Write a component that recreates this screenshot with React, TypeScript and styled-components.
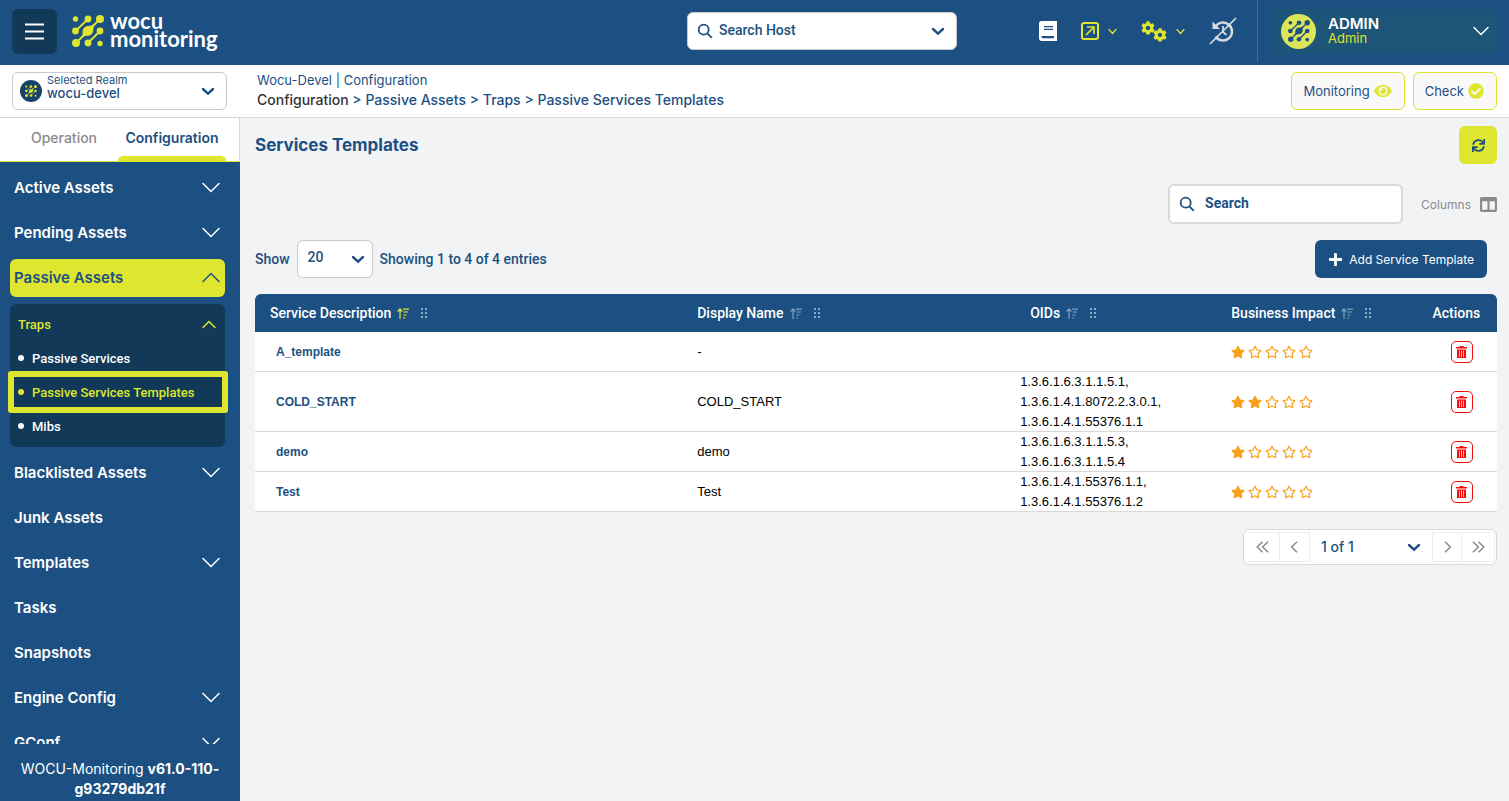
import React from "react";
import styled, { createGlobalStyle, css } from "styled-components";
import {
  FaCheckCircle,
  FaCog,
  FaColumns,
  FaEye,
  FaPlus,
  FaRegStar,
  FaStar,
  FaSync,
} from "react-icons/fa";

const color = {
  blue: "#1d5082",
  navy: "#123957",
  lime: "#dfe62f",
  page: "#f2f3f5",
  line: "#d9d9d9",
  grey: "#8b8b8b",
  white: "#ffffff",
  orange: "#f9a11b",
  red: "#f30d0d",
};

const wide = `Inter, "Liberation Sans", sans-serif`;
const narrow = `Roboto, "Liberation Sans", sans-serif`;
const plain = `"Liberation Sans", Arial, sans-serif`;

const GlobalStyle = createGlobalStyle`
  *, *::before, *::after { box-sizing: border-box; }
  body { margin: 0; background: ${color.page}; color: ${color.blue}; font-family: ${wide}; font-size: 14px; }
  button, input, select { font: inherit; color: inherit; margin: 0; }
  button { cursor: pointer; }
  a { color: inherit; text-decoration: none; }
  svg { display: block; flex: none; }
`;

/* ---------- shell ---------- */

const Shell = styled.div`
  display: flex;
  flex-direction: column;
  height: 100vh;
`;

const Header = styled.header`
  flex: none;
  display: flex;
  align-items: center;
  height: 65px;
  padding: 0 12px 3px;
  background: ${color.blue};
`;

const HeaderSide = styled.div<{ $grow: number; $end?: boolean }>`
  flex: ${(p) => p.$grow} 1 0;
  display: flex;
  align-items: center;
  justify-content: ${(p) => (p.$end ? "flex-end" : "flex-start")};
`;

const MenuButton = styled.button`
  display: grid;
  place-items: center;
  width: 45px;
  height: 45px;
  padding: 0;
  border: 0;
  border-radius: 6px;
  background: ${color.navy};
  color: ${color.white};
`;

const Brand = styled.a`
  display: flex;
  align-items: center;
  gap: 6px;
  margin-left: 15px;
  color: ${color.lime};
`;

const BrandName = styled.span`
  font-family: Lato, sans-serif;
  font-size: 22px;
  font-weight: 700;
  line-height: 18px;
  padding-bottom: 3px;
  color: ${color.white};
`;

const HostSearch = styled.div`
  display: flex;
  align-items: center;
  gap: 6px;
  width: 270px;
  height: 38px;
  padding: 0 11px 0 9px;
  border: 1px solid #c9c9c9;
  border-radius: 6px;
  background: ${color.white};
`;

const TextInput = styled.input<{ $strong?: boolean }>`
  flex: 1;
  min-width: 0;
  padding: 0 0 2px;
  border: 0;
  outline: 0;
  background: transparent;
  font-family: ${narrow};
  font-size: 14px;
  font-weight: ${(p) => (p.$strong ? 700 : 500)};
  &::placeholder { color: ${color.blue}; opacity: 1; }
`;

const BareButton = styled.button`
  display: flex;
  align-items: center;
  gap: 9px;
  padding: 0;
  border: 0;
  background: none;
`;

const Tools = styled.div`
  display: flex;
  align-items: center;
  height: 62px;
  gap: 24px;
  padding-right: 20px;
  border-right: 1px solid #3f7188;
  color: ${color.lime};
`;

const Gears = styled.span`
  display: flex;
  width: 26px;
  height: 21px;
  & svg:last-child { align-self: flex-end; margin-left: -2px; }
`;

const Account = styled.button`
  display: flex;
  align-items: center;
  gap: 12px;
  width: 223px;
  height: 45px;
  margin-left: 16px;
  padding: 0 8px 0 7px;
  border: 0;
  border-radius: 6px;
  background: #1d5578;
  color: ${color.white};
  text-align: left;
`;

const Avatar = styled.span<{ $size: number; $dark?: boolean }>`
  display: grid;
  place-items: center;
  flex: none;
  width: ${(p) => p.$size}px;
  height: ${(p) => p.$size}px;
  border-radius: 50%;
  background: ${(p) => (p.$dark ? "#17436a" : "#dde559")};
  color: ${(p) => (p.$dark ? color.lime : color.blue)};
`;

const AccountText = styled.span`
  flex: 1;
  display: flex;
  flex-direction: column;
  font-size: 15px;
  font-weight: 600;
  line-height: 15px;
  & small { font-size: 13px; font-weight: 400; color: ${color.lime}; }
`;

/* ---------- sub bar ---------- */

const SubBar = styled.div`
  flex: none;
  display: flex;
  align-items: center;
  height: 53px;
  padding: 0 12px;
  border-bottom: 1px solid ${color.line};
  background: ${color.white};
`;

const Realm = styled.label`
  display: flex;
  align-items: center;
  gap: 5px;
  width: 215px;
  height: 38px;
  margin-right: 30px;
  padding: 0 11px 0 7px;
  border: 1px solid #c9c9c9;
  border-radius: 6px;
`;

const RealmText = styled.span`
  flex: 1;
  display: flex;
  flex-direction: column;
  padding-bottom: 9px;
  font-size: 11px;
  line-height: 12px;
`;

const BareSelect = styled.select<{ $size?: number }>`
  appearance: none;
  padding: 0;
  border: 0;
  outline: 0;
  background: transparent;
  font-size: ${(p) => p.$size ?? 13}px;
  font-weight: 500;
  line-height: 14px;
`;

const Crumbs = styled.nav`
  flex: 1;
  padding-bottom: 2px;
  line-height: 20px;
  font-size: 13px;
  & p { margin: 0; }
`;

const Trail = styled.p`
  font-size: 14px;
  font-weight: 500;
  & b { font-weight: 500; color: #333; }
`;

const OutlineButton = styled.button`
  display: flex;
  align-items: center;
  gap: 4px;
  height: 38px;
  margin-left: 8px;
  padding: 0 12px 0 11px;
  border: 1px solid ${color.lime};
  border-radius: 6px;
  background: #f9f9f9;
  font-family: ${wide};
  font-size: 13px;
  & svg { color: ${color.lime}; }
`;

/* ---------- sidebar ---------- */

const Body = styled.div`
  flex: 1;
  display: flex;
  min-height: 0;
`;

const Sidebar = styled.aside`
  flex: none;
  display: flex;
  flex-direction: column;
  width: 240px;
  background: ${color.blue};
  color: ${color.white};
`;

const Tabs = styled.div`
  flex: none;
  display: flex;
  gap: 6px;
  height: 44px;
  padding: 0 13px 0 16px;
  border-right: 1px solid ${color.line};
  border-bottom: 1px solid ${color.lime};
  background: ${color.white};
`;

const Tab = styled.button<{ $active?: boolean }>`
  flex: ${(p) => (p.$active ? "0 0 108px" : "1")};
  padding: 0;
  border: 0;
  border-bottom: 5px solid transparent;
  background: none;
  font-size: 14px;
  font-weight: ${(p) => (p.$active ? 600 : 500)};
  color: ${(p) => (p.$active ? color.blue : color.grey)};
  ${(p) =>
    p.$active &&
    css`
      border: 0;
      padding-bottom: 5px;
      background: radial-gradient(circle at 5px 5px, ${color.lime} 5px, transparent 5px) 0 100% / 5px 5px no-repeat,
        radial-gradient(circle at 0 5px, ${color.lime} 5px, transparent 5px) 100% 100% / 5px 5px no-repeat,
        linear-gradient(${color.lime}, ${color.lime}) 50% 100% / 98px 5px no-repeat;
    `}
`;

const Menu = styled.nav`
  flex: 1;
  min-height: 0;
  overflow: hidden;
  display: flex;
  flex-direction: column;
  gap: 7px;
  padding: 7px 15px 0 10px;
`;

const MenuItem = styled.button<{ $active?: boolean }>`
  flex: none;
  display: flex;
  align-items: center;
  justify-content: space-between;
  height: 38px;
  padding: 0 5px 1px 4px;
  border: 0;
  border-radius: 6px;
  background: ${(p) => (p.$active ? color.lime : "transparent")};
  color: ${(p) => (p.$active ? color.blue : color.white)};
  font-size: 15px;
  font-weight: 600;
`;

const SubMenu = styled.div`
  flex: none;
  display: flex;
  flex-direction: column;
  padding: 4px 0;
  border-radius: 6px;
  background: ${color.navy};
  font-family: ${narrow};
  font-size: 13px;
  font-weight: 500;
`;

const SubHead = styled.button`
  display: flex;
  align-items: center;
  justify-content: space-between;
  height: 33px;
  padding: 0 9px 0 8px;
  border: 0;
  background: none;
  color: ${color.lime};
`;

const SubItem = styled.a<{ $active?: boolean }>`
  position: relative;
  display: flex;
  align-items: center;
  gap: 8px;
  height: 34px;
  padding-left: 8px;
  color: ${(p) => (p.$active ? color.lime : color.white)};
  &::before {
    content: "";
    width: 6px;
    height: 6px;
    border-radius: 50%;
    background: currentColor;
  }
  ${(p) =>
    p.$active &&
    css`
      &::after {
        content: "";
        position: absolute;
        inset: -4px -3px -4px -2px;
        border: 6px solid ${color.lime};
        border-radius: 3px;
      }
    `}
`;

const Version = styled.p`
  flex: none;
  margin: 0;
  padding: 15px 10px 2px;
  text-align: center;
  font-size: 14px;
  line-height: 20px;
`;

/* ---------- main ---------- */

const Main = styled.main`
  flex: 1;
  min-width: 0;
  overflow: auto;
  padding: 8px 12px 8px 15px;
`;

const Bar = styled.div<{ $gap?: number; $top?: number; $end?: boolean; $inset?: number }>`
  display: flex;
  align-items: center;
  justify-content: ${(p) => (p.$end ? "flex-end" : "space-between")};
  gap: ${(p) => p.$gap ?? 0}px;
  margin-top: ${(p) => p.$top ?? 0}px;
  padding-right: ${(p) => p.$inset ?? 0}px;
`;

const Title = styled.h1`
  margin: 0;
  font-size: 17px;
  font-weight: 700;
  line-height: 24px;
`;

const RefreshButton = styled.button`
  display: grid;
  place-items: center;
  width: 38px;
  height: 38px;
  padding: 0;
  border: 0;
  border-radius: 6px;
  background: ${color.lime};
`;

const SearchBox = styled.div`
  display: flex;
  align-items: center;
  gap: 10px;
  width: 235px;
  height: 40px;
  padding: 0 9px;
  border: 2px solid ${color.line};
  border-radius: 6px;
  background: ${color.white};
`;

const ColumnsButton = styled(BareButton)`
  font-size: 12px;
  color: ${color.grey};
`;

const Paging = styled.div`
  display: flex;
  align-items: center;
  gap: 7px;
  font-family: ${narrow};
  font-weight: 500;
`;

const SelectBox = styled.span`
  display: flex;
  align-items: center;
  justify-content: space-between;
  width: 76px;
  height: 38px;
  padding: 0 7px 0 10px;
  border: 1px solid #c9c9c9;
  border-radius: 6px;
  background: ${color.white};
  & select { flex: 1; min-width: 0; padding-bottom: 4px; }
`;

const AddButton = styled.button`
  display: flex;
  align-items: center;
  gap: 6px;
  height: 38px;
  padding: 0 13px;
  border: 0;
  border-radius: 6px;
  background: ${color.blue};
  color: ${color.white};
  font-size: 12px;
`;

const Table = styled.table`
  width: 100%;
  margin-top: 16px;
  table-layout: fixed;
  border-spacing: 0;
  font-family: ${plain};
  font-size: 13px;
  line-height: 20px;
  color: #000;
`;

const Th = styled.th<{ $width?: string; $indent?: number }>`
  width: ${(p) => p.$width ?? "auto"};
  height: 38px;
  padding: 0 0 0 ${(p) => p.$indent ?? 15}px;
  background: ${color.blue};
  color: ${color.white};
  font-family: ${narrow};
  font-size: 14px;
  font-weight: 500;
  text-align: left;
  &:first-child { border-top-left-radius: 6px; }
  &:last-child { border-top-right-radius: 6px; }
`;

const HeadCell = styled.span`
  display: flex;
  align-items: center;
`;

const SortButton = styled.button<{ $active?: boolean }>`
  padding: 0;
  margin: 0 12px 0 6px;
  border: 0;
  background: none;
  color: ${(p) => (p.$active ? color.lime : "#7fa0bd")};
`;

const Grip = styled.svg`
  color: #8eabc4;
`;

const Td = styled.td<{ $indent?: number }>`
  height: 40px;
  padding: 0 0 0 ${(p) => p.$indent ?? 15}px;
  background: ${color.white};
  box-shadow: inset 0 -1px ${color.line};
  vertical-align: middle;
`;

const NameLink = styled.a`
  font-size: 12px;
  font-weight: 700;
  color: ${color.blue};
`;

const Stars = styled.span`
  display: flex;
  gap: 3px;
  color: ${color.orange};
`;

const DeleteButton = styled.button`
  display: grid;
  place-items: center;
  width: 22px;
  height: 22px;
  padding: 0;
  border: 1px solid ${color.red};
  border-radius: 5px;
  background: ${color.white};
  color: ${color.red};
`;

const Pager = styled.div`
  display: flex;
  height: 36px;
  padding: 2px 1px;
  border: 1px solid ${color.line};
  border-radius: 6px;
  background: ${color.white};
`;

const PagerButton = styled.button<{ $width: number }>`
  display: grid;
  place-items: center;
  width: ${(p) => p.$width}px;
  padding: 0;
  border: 1px solid #efefef;
  border-width: 1px 1px 1px 0;
  background: ${color.white};
  color: ${color.grey};
`;

const PageSelect = styled.span`
  display: flex;
  align-items: center;
  width: 123px;
  padding: 0 11px;
  border-right: 1px solid #efefef;
  & select { flex: 1; min-width: 0; }
`;

/* ---------- drawings ---------- */

const NetworkMark = ({ size }: { size: number }) => (
  <svg width={size} height={size} viewBox="0 0 32 32" fill="currentColor" aria-hidden="true">
    <path stroke="currentColor" strokeWidth="1.8" d="M3.5 16 16 4M4 28 28 4M16 28 28 16" />
    <path d="M10.6 17c-.2-3.600 2.400-6 6-6 2.400 0 4.400-1 6.400-3-1.400 2.200-1.600 4-1.600 6.400 0 3.800-2.600 6.400-6.200 6.400-2.400 0-4.400 1-6.400 3 1.400-2.200 2-4.200 1.800-6.800z" />
    <circle cx="3.5" cy="4" r="2.7" />
    <circle cx="16" cy="4" r="3.4" />
    <circle cx="28" cy="4" r="4" />
    <circle cx="3.5" cy="16" r="3.4" />
    <circle cx="28" cy="16" r="3.4" />
    <circle cx="4" cy="28" r="4" />
    <circle cx="16" cy="28" r="3.4" />
    <circle cx="28" cy="28.5" r="2.7" />
  </svg>
);

const Chevron = ({ w, thick = 1.5, up }: { w: number; thick?: number; up?: boolean }) => {
  const h = Math.round(w / 2) + 2;
  return (
    <svg width={w} height={h} viewBox={`0 0 ${w} ${h}`} fill="none" stroke="currentColor" strokeWidth={thick} strokeLinecap="round" aria-hidden="true">
      <path d={up ? `M1 ${h - 1.5} ${w / 2} 1.5 ${w - 1} ${h - 1.5}` : `M1 1.5 ${w / 2} ${h - 1.5} ${w - 1} 1.5`} />
    </svg>
  );
};

const SelectArrow = () => (
  <svg width="14" height="9" viewBox="0 0 14 9" fill="none" stroke={color.blue} strokeWidth="2.4" strokeLinecap="round" aria-hidden="true">
    <path d="M2 2l5 4.600L12 2" />
  </svg>
);

const Magnifier = () => (
  <svg width="16" height="16" viewBox="0 0 16 16" fill="none" stroke={color.blue} strokeWidth="1.8" aria-hidden="true">
    <circle cx="6.7" cy="6.7" r="5" />
    <path d="M10.3 10.3l4.500 4.500" />
  </svg>
);

const BookIcon = () => (
  <svg width="18" height="20" viewBox="0 0 18 20" aria-hidden="true">
    <path fill="#fff" d="M2.500 0H18v20H3A3 3 0 0 1 0 17V2.500A2.500 2.500 0 0 1 2.500 0z" />
    <path stroke={color.blue} strokeWidth="1.2" d="M5 5.600h9M5 8.400h9" />
    <path fill={color.blue} d="M3.500 15H15v2.200H3.500a1.100 1.100 0 0 1 0-2.200z" />
  </svg>
);

const OpenIcon = () => (
  <svg width="18" height="18" viewBox="0 0 18 18" fill="none" stroke="currentColor" strokeWidth="2" aria-hidden="true">
    <rect x="1" y="1" width="16" height="16" rx="2" />
    <path strokeWidth="1.7" d="M5 13l7.500-7.500M6 5h7v7" />
  </svg>
);

const HistoryOff = () => (
  <svg width="28" height="28" viewBox="0 0 28 28" fill="none" stroke="#d5dbe1" strokeWidth="2.4" aria-hidden="true">
    <path d="M6.500 9.500a9 9 0 1 1 0 10" />
    <path fill="#d5dbe1" stroke="none" d="M3.500 4.500v7.500H11z" />
    <path strokeWidth="1.8" d="M14 9v6l3.500 3" />
    <path strokeWidth="1.7" d="M1 27 27 1" />
  </svg>
);

const SortIcon = () => (
  <svg width="12" height="11" viewBox="0 0 12 11" fill="none" stroke="currentColor" strokeWidth="1.2" aria-hidden="true">
    <path d="M3 11V1.200M.7 3.500 3 1l2.300 2.500M6 1.100h6M6.500 4h4.500M6.500 7h3M6.500 9.800h1.500" />
  </svg>
);

const GripIcon = () => (
  <Grip width="6" height="10" viewBox="0 0 6 10" fill="currentColor" aria-hidden="true">
    <path d="M0 0h2v2H0zM4 0h2v2H4zM0 4h2v2H0zM4 4h2v2H4zM0 8h2v2H0zM4 8h2v2H4z" />
  </Grip>
);

const TrashIcon = () => (
  <svg width="12" height="12" viewBox="0 0 12 12" fill="currentColor" aria-hidden="true">
    <path d="M3.500 0h4v1H11v1.500H0V1h3.500z" />
    <path d="M1 3.500h9V12H1z" />
    <path stroke="#fff" strokeWidth=".7" d="M3.500 4.500V11M5.500 4.500V11M7.500 4.500V11" />
  </svg>
);

const PageArrow = ({ right, double }: { right?: boolean; double?: boolean }) => (
  <svg width="13" height="12" viewBox="0 0 13 12" fill="none" stroke="currentColor" strokeWidth="1.5" aria-hidden="true">
    {double ? (
      <path d={right ? "M1 .7 6.3 6 1 11.3M6.500.7 11.8 6l-5.300 5.300" : "M6.500.7 1.2 6l5.300 5.300M12 .7 6.7 6l5.300 5.300"} />
    ) : (
      <path d={right ? "M4 .7 9.3 6 4 11.3" : "M9 .7 3.7 6 9 11.3"} />
    )}
  </svg>
);

/* ---------- data ---------- */

const before = ["Active Assets", "Pending Assets"];
const after = [
  { label: "Blacklisted Assets", open: true },
  { label: "Junk Assets" },
  { label: "Templates", open: true },
  { label: "Tasks" },
  { label: "Snapshots" },
  { label: "Engine Config", open: true },
  { label: "GConf", open: true },
];

const rows = [
  { name: "A_template", display: "-", oids: [], impact: 1 },
  { name: "COLD_START", display: "COLD_START", oids: ["1.3.6.1.6.3.1.1.5.1,", "1.3.6.1.4.1.8072.2.3.0.1,", "1.3.6.1.4.1.55376.1.1"], impact: 2 },
  { name: "demo", display: "demo", oids: ["1.3.6.1.6.3.1.1.5.3,", "1.3.6.1.6.3.1.1.5.4"], impact: 1 },
  { name: "Test", display: "Test", oids: ["1.3.6.1.4.1.55376.1.1,", "1.3.6.1.4.1.55376.1.2"], impact: 1 },
];

const columns = [
  { label: "Service Description", width: "34.4%", sorted: true },
  { label: "Display Name", width: "26%" },
  { label: "OIDs", width: "17%", indent: 25 },
  { label: "Business Impact", width: "16.2%" },
];

export default function App() {
  return (
    <Shell>
      <GlobalStyle />
      <Header>
        <HeaderSide $grow={5}>
          <MenuButton aria-label="Toggle menu">
            <svg width="19" height="17" viewBox="0 0 19 17" stroke="currentColor" strokeWidth="2">
              <path d="M0 1.500h19M0 8.500h19M0 15.500h19" />
            </svg>
          </MenuButton>
          <Brand href="#">
            <NetworkMark size={32} />
            <BrandName>
              wocu
              <br />
              monitoring
            </BrandName>
          </Brand>
        </HeaderSide>
        <HostSearch>
          <Magnifier />
          <TextInput aria-label="Search Host" placeholder="Search Host" />
          <BareButton aria-label="Show hosts">
            <SelectArrow />
          </BareButton>
        </HostSearch>
        <HeaderSide $grow={4} $end>
          <Tools>
            <BareButton aria-label="Documentation">
              <BookIcon />
            </BareButton>
            <BareButton aria-label="Open external tools">
              <OpenIcon />
              <Chevron w={9} thick={1.2} />
            </BareButton>
            <BareButton aria-label="Settings">
              <Gears>
                <FaCog size={14} />
                <FaCog size={14} />
              </Gears>
              <Chevron w={9} thick={1.2} />
            </BareButton>
            <BareButton aria-label="History disabled">
              <HistoryOff />
            </BareButton>
          </Tools>
          <Account>
            <Avatar $size={35}>
              <NetworkMark size={22} />
            </Avatar>
            <AccountText>
              ADMIN
              <small>Admin</small>
            </AccountText>
            <Chevron w={16} />
          </Account>
        </HeaderSide>
      </Header>

      <SubBar>
        <Realm>
          <Avatar $size={22} $dark>
            <NetworkMark size={12} />
          </Avatar>
          <RealmText>
            Selected Realm
            <BareSelect defaultValue="wocu-devel">
              <option>wocu-devel</option>
            </BareSelect>
          </RealmText>
          <SelectArrow />
        </Realm>
        <Crumbs aria-label="Breadcrumb">
          <p>Wocu-Devel | Configuration</p>
          <Trail>
            <b>Configuration</b> &gt; <a href="#">Passive Assets</a> &gt; <a href="#">Traps</a> &gt;{" "}
            <a href="#">Passive Services Templates</a>
          </Trail>
        </Crumbs>
        <OutlineButton>
          Monitoring <FaEye size={18} />
        </OutlineButton>
        <OutlineButton>
          Check <FaCheckCircle size={16} />
        </OutlineButton>
      </SubBar>

      <Body>
        <Sidebar>
          <Tabs>
            <Tab>Operation</Tab>
            <Tab $active>Configuration</Tab>
          </Tabs>
          <Menu>
            {before.map((label) => (
              <MenuItem key={label}>
                {label}
                <Chevron w={18} />
              </MenuItem>
            ))}
            <MenuItem $active>
              Passive Assets
              <Chevron w={18} up />
            </MenuItem>
            <SubMenu>
              <SubHead>
                Traps
                <Chevron w={14} up />
              </SubHead>
              <SubItem href="#">Passive Services</SubItem>
              <SubItem href="#" $active>
                Passive Services Templates
              </SubItem>
              <SubItem href="#">Mibs</SubItem>
            </SubMenu>
            {after.map((item) => (
              <MenuItem key={item.label}>
                {item.label}
                {item.open && <Chevron w={18} />}
              </MenuItem>
            ))}
          </Menu>
          <Version>
            WOCU-Monitoring <b>v61.0-110-g93279db21f</b>
          </Version>
        </Sidebar>

        <Main>
          <Bar>
            <Title>Services Templates</Title>
            <RefreshButton aria-label="Refresh">
              <FaSync size={13} />
            </RefreshButton>
          </Bar>
          <Bar $end $gap={18} $top={20}>
            <SearchBox>
              <Magnifier />
              <TextInput $strong aria-label="Search" placeholder="Search" />
            </SearchBox>
            <ColumnsButton>
              Columns <FaColumns size={17} />
            </ColumnsButton>
          </Bar>
          <Bar $top={16} $inset={10}>
            <Paging>
              <label htmlFor="page-size">Show</label>
              <SelectBox>
                <BareSelect id="page-size" $size={14} defaultValue="20">
                  <option>20</option>
                </BareSelect>
                <SelectArrow />
              </SelectBox>
              <span>Showing 1 to 4 of 4 entries</span>
            </Paging>
            <AddButton>
              <FaPlus size={15} />
              Add Service Template
            </AddButton>
          </Bar>

          <Table>
            <thead>
              <tr>
                {columns.map((c) => (
                  <Th key={c.label} $width={c.width} $indent={c.indent}>
                    <HeadCell>
                      {c.label}
                      <SortButton $active={c.sorted} aria-label={`Sort by ${c.label}`}>
                        <SortIcon />
                      </SortButton>
                      <GripIcon />
                    </HeadCell>
                  </Th>
                ))}
                <Th>Actions</Th>
              </tr>
            </thead>
            <tbody>
              {rows.map((r) => (
                <tr key={r.name}>
                  <Td $indent={21}>
                    <NameLink href="#">{r.name}</NameLink>
                  </Td>
                  <Td>{r.display}</Td>
                  <Td>
                    {r.oids.map((oid) => (
                      <div key={oid}>{oid}</div>
                    ))}
                  </Td>
                  <Td>
                    <Stars role="img" aria-label={`${r.impact} of 5`}>
                      {[1, 2, 3, 4, 5].map((n) => (n <= r.impact ? <FaStar key={n} size={14} /> : <FaRegStar key={n} size={14} />))}
                    </Stars>
                  </Td>
                  <Td $indent={34}>
                    <DeleteButton aria-label={`Delete ${r.name}`}>
                      <TrashIcon />
                    </DeleteButton>
                  </Td>
                </tr>
              ))}
            </tbody>
          </Table>

          <Bar $end $top={17}>
            <Pager>
              <PagerButton $width={35} aria-label="First page">
                <PageArrow double />
              </PagerButton>
              <PagerButton $width={30} aria-label="Previous page">
                <PageArrow />
              </PagerButton>
              <PageSelect>
                <BareSelect $size={14} aria-label="Page" defaultValue="1 of 1">
                  <option>1 of 1</option>
                </BareSelect>
                <SelectArrow />
              </PageSelect>
              <PagerButton $width={29} aria-label="Next page">
                <PageArrow right />
              </PagerButton>
              <PagerButton $width={33} aria-label="Last page">
                <PageArrow right double />
              </PagerButton>
            </Pager>
          </Bar>
        </Main>
      </Body>
    </Shell>
  );
}
